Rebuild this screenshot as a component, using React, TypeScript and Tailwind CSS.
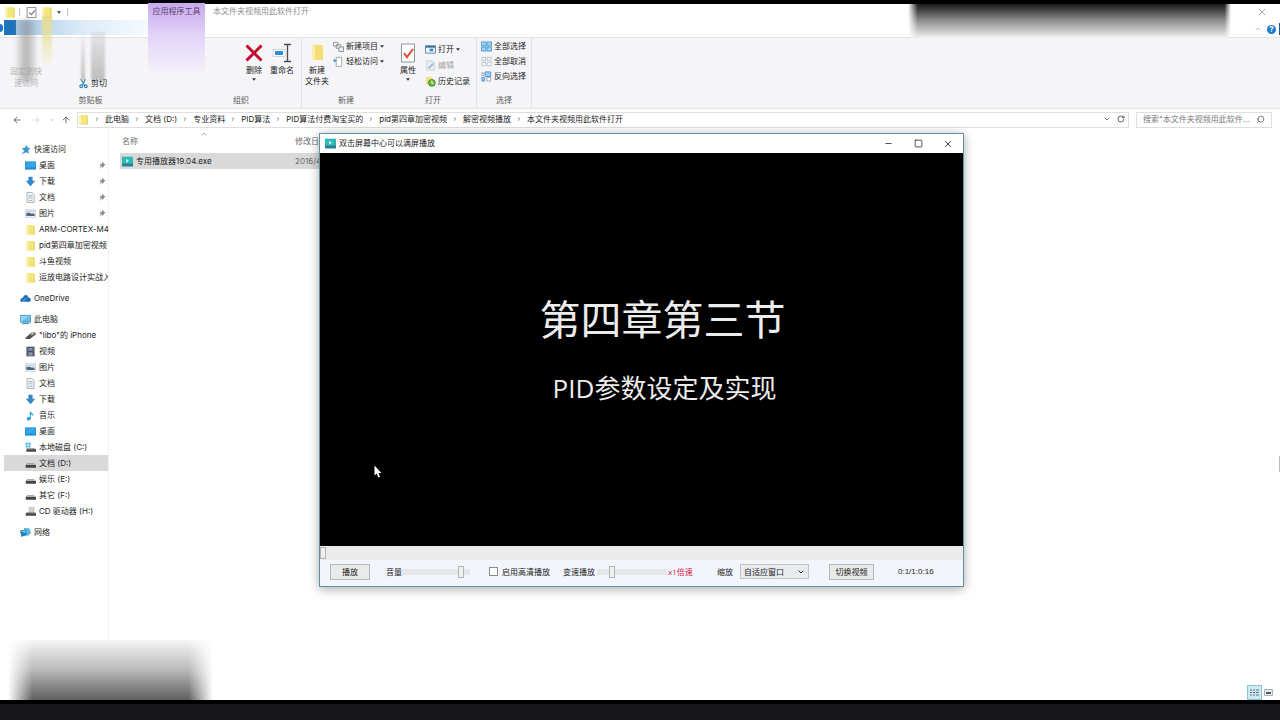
import type { ReactNode } from 'react';
import { ArrowLeft, ArrowRight, ArrowUp, ChevronDown, ChevronRight, ChevronUp, Minus, RotateCw, Search, Square, X } from 'lucide-react';
import clsx from 'clsx';

type IconName =
  | 'folder' | 'star' | 'desktop' | 'download' | 'doc' | 'picture' | 'cloud' | 'pc' | 'phone'
  | 'video' | 'music' | 'system' | 'drive' | 'cd' | 'network' | 'player';

const icons: Record<IconName, ReactNode> = {
  folder: (
    <>
      <path d="M2 1.500h11l1 1V15.500H2z" fill="#f3e67e" />
      <path d="M2 1.500h2.500v14H2z" fill="#f9f2b0" />
      <path d="M12.500 2.500H14v13h-2z" fill="#e6d566" />
    </>
  ),
  star: <path d="M10 1l1 4 4 1-3 3 1 5-4-2-7 3 4-5-3-4 4-.5z" fill="#3d97d3" />,
  desktop: (
    <>
      <path d="M0 2h16v12H0z" fill="#1c8fd6" />
      <path d="M1 3h14v8H1z" fill="#35a5e6" />
    </>
  ),
  download: <path d="M5 1h6v6h4l-7 8-7-8h4z" fill="#3587c9" />,
  doc: (
    <>
      <path d="M3 .7h7l3.300 3V15.300H3z" fill="#f7f9fa" stroke="#8a979c" />
      <path d="M5 5h6M5 7.500h6M5 10h2M9 10h2M5 12.500h6" stroke="#7d9ba8" />
    </>
  ),
  picture: (
    <>
      <path d="M.5 2.500h15v11H.5z" fill="#f4f7fa" stroke="#b9c2c9" />
      <path d="M2 7h5l2 1h5v3.500H2z" fill="#4f6680" />
      <path d="M2 4h12v2H2z" fill="#b8d4ea" />
    </>
  ),
  cloud: <path d="M1 13c-2-4 1-6 3-6 1-5 7-6 8-1 3 0 5 3 3 7z M6 13c-2-4 3-6 4-4" fill="#1a6fbd" stroke="#fff" strokeWidth=".6" />,
  pc: (
    <>
      <path d="M.5 2h15v10H.5z" fill="#5bbbe9" stroke="#3d7ea6" />
      <path d="M1 12L14 3H1z" fill="#8dd5f4" />
      <path d="M3 14h10" stroke="#4c86a5" strokeWidth="1.500" />
    </>
  ),
  phone: (
    <>
      <path d="M0 12l9-8 5-1 2 3-9 7H2z" fill="#55504c" />
      <path d="M8 6l3-3 4 1-5 4z" fill="#bdb8b2" />
    </>
  ),
  video: (
    <>
      <path d="M2 1h12v14H2z" fill="#4a4f5c" />
      <path d="M5 3h6v4H5zM5 9h6v5H5z" fill="#8491b5" />
      <path d="M3 2v12M13 2v12" stroke="#c8c8c8" strokeDasharray="1.500 1.500" />
    </>
  ),
  music: <path d="M7 1c1 3 6 3 5 8-1-2-2-3-3.500-3v6c0 4-6 4-6 1s3-3 4.500-2.500z" fill="#279bdd" />,
  system: (
    <>
      <path d="M1 1h3v3H1zM5 1h3v3H5zM1 5h3v3H1zM5 5h3v3H5z" fill="#38b0dc" />
      <path d="M3 9h11l2 2v3H2v-3z" fill="#474747" />
      <path d="M3 9h11l1 1.500H3z" fill="#b9b9b9" />
    </>
  ),
  drive: (
    <>
      <path d="M3 8h10l3 3v3H1v-3z" fill="#444" />
      <path d="M3 8h10l2 2H2z" fill="#b5b5b5" />
    </>
  ),
  cd: (
    <>
      <path d="M5 1h9v9H5z" fill="#cfcfcf" />
      <path d="M3 9h11l2 2v3H1v-3z" fill="#484848" />
      <path d="M3 9h11l1 1.500H2z" fill="#aaa" />
    </>
  ),
  network: (
    <>
      <path d="M6 1l8 1 2 7-5 4-6-4z" fill="#5ab9df" />
      <path d="M0 5l8-1 2 8-8 2z" fill="#2184bd" />
      <path d="M2 6l5-1 1 4z" fill="#7fd0ee" />
    </>
  ),
  player: (
    <>
      <path d="M0 1h16v14H0z" fill="#2fb9b4" />
      <path d="M0 11h16v4H0z" fill="#2a7f93" />
      <path d="M6 4l4 3-4 3z" fill="#d2f5f0" />
    </>
  ),
};

function Icon({ name, className = 'h-3 w-3' }: { name: IconName; className?: string }) {
  return (
    <svg viewBox="0 0 16 16" className={clsx('shrink-0', className)} aria-hidden="true">
      {icons[name]}
    </svg>
  );
}

function Caret() {
  return (
    <svg viewBox="0 0 5 3" className="h-[3px] w-1 shrink-0" aria-hidden="true">
      <path d="M0 0h5L2.500 3z" fill="#333" />
    </svg>
  );
}

function RibbonGroup({ label, className, children }: { label?: string; className: string; children: ReactNode }) {
  return (
    <section className={clsx('flex flex-col justify-between pb-0.5', className)}>
      <div className="flex">{children}</div>
      <h2 className="text-center leading-[11px] text-[#5c5c5c]">{label}</h2>
    </section>
  );
}

function LargeButton({ icon, caret, children }: { icon: ReactNode; caret?: boolean; children: ReactNode }) {
  return (
    <button type="button" className="flex w-7 shrink-0 flex-col items-center gap-0.5 pt-[5px] leading-[11px]">
      <svg viewBox="0 0 20 20" className="h-5 w-5" aria-hidden="true">{icon}</svg>
      <span className="whitespace-nowrap">{children}</span>
      {caret && <Caret />}
    </button>
  );
}

function SmallButton({ icon, caret, disabled, className, children }: {
  icon: ReactNode; caret?: boolean; disabled?: boolean; className?: string; children: ReactNode;
}) {
  return (
    <button
      type="button"
      disabled={disabled}
      className={clsx('flex items-center gap-0.5 whitespace-nowrap disabled:text-[#a5a5a5]', className)}
    >
      <svg viewBox="0 0 12 12" className="h-[11px] w-[11px] shrink-0" aria-hidden="true">{icon}</svg>
      {children}
      {caret && <Caret />}
    </button>
  );
}

const crumbs = [
  '此电脑', '文档 (D:)', '专业资料', 'PID算法', 'PID算法付费淘宝买的',
  'pid第四章加密视频', '解密视频播放', '本文件夹视频用此软件打开',
];

interface TreeItem {
  icon: IconName;
  label: string;
  pinned?: boolean;
  selected?: boolean;
}

const tree: { root: TreeItem; items: TreeItem[] }[] = [
  {
    root: { icon: 'star', label: '快速访问' },
    items: [
      { icon: 'desktop', label: '桌面', pinned: true },
      { icon: 'download', label: '下载', pinned: true },
      { icon: 'doc', label: '文档', pinned: true },
      { icon: 'picture', label: '图片', pinned: true },
      { icon: 'folder', label: 'ARM-CORTEX-M4' },
      { icon: 'folder', label: 'pid第四章加密视频' },
      { icon: 'folder', label: '斗鱼视频' },
      { icon: 'folder', label: '运放电路设计实战入' },
    ],
  },
  { root: { icon: 'cloud', label: 'OneDrive' }, items: [] },
  {
    root: { icon: 'pc', label: '此电脑' },
    items: [
      { icon: 'phone', label: '"libo"的 iPhone' },
      { icon: 'video', label: '视频' },
      { icon: 'picture', label: '图片' },
      { icon: 'doc', label: '文档' },
      { icon: 'download', label: '下载' },
      { icon: 'music', label: '音乐' },
      { icon: 'desktop', label: '桌面' },
      { icon: 'system', label: '本地磁盘 (C:)' },
      { icon: 'drive', label: '文档 (D:)', selected: true },
      { icon: 'drive', label: '娱乐 (E:)' },
      { icon: 'drive', label: '其它 (F:)' },
      { icon: 'cd', label: 'CD 驱动器 (H:)' },
    ],
  },
  { root: { icon: 'network', label: '网络' }, items: [] },
];

function TreeRow({ item, nested }: { item: TreeItem; nested?: boolean }) {
  return (
    <a
      href="#"
      className={clsx(
        'flex h-4 items-center gap-[3px] whitespace-nowrap',
        nested ? 'pl-[21px]' : 'pl-4',
        item.selected && 'bg-[#d9d9d9]'
      )}
    >
      <Icon name={item.icon} className="h-[11px] w-[11px]" />
      <span className="flex-1">{item.label}</span>
      {item.pinned && (
        <svg viewBox="0 0 8 8" className="mr-0.5 h-2 w-2 shrink-0" aria-hidden="true">
          <path d="M4.500 1l3 3-1 .3-1.200 1.500-.3 1.200-1.500-1.500L1 8l1.800-3L1.500 3.500l1.300-.3L4.200 2z" fill="#8b8b8b" />
        </svg>
      )}
    </a>
  );
}

const rangeBase =
  'appearance-none bg-[#e4e6ea] outline-none [&::-webkit-slider-thumb]:appearance-none [&::-webkit-slider-thumb]:w-1.5 [&::-webkit-slider-thumb]:h-3 [&::-webkit-slider-thumb]:border [&::-webkit-slider-thumb]:border-solid [&::-webkit-slider-thumb]:border-[#b4b4b4] [&::-webkit-slider-thumb]:bg-[#f0f0f0]';

function PlayerWindow() {
  return (
    <section className="absolute left-[319px] top-[133px] z-20 flex w-[645px] flex-col border border-[#5f8fa8] bg-[#f3f5fd] font-['Open_Sans','Noto_Sans_CJK_SC',sans-serif] shadow-[0_2px_10px_rgba(0,0,0,0.35)]">
      <header className="flex h-[19px] items-center bg-white pl-[5px]">
        <Icon name="player" className="h-[11px] w-[11px]" />
        <h1 className="flex-1 pb-0.5 pl-[3px]">双击屏幕中心可以满屏播放</h1>
        <button type="button" aria-label="最小化" className="flex w-[30px] justify-center">
          <Minus className="h-[9px] w-[9px]" />
        </button>
        <button type="button" aria-label="最大化" className="flex w-[30px] justify-center">
          <Square className="h-[9px] w-[9px]" />
        </button>
        <button type="button" aria-label="关闭" className="flex w-[30px] justify-center">
          <X className="h-2.5 w-2.5" />
        </button>
      </header>

      {/* 画面 */}
      <div className="relative flex h-[393px] flex-col items-center bg-black pl-[42px] pt-[141px] text-[#ececec]">
        <p className="text-[41px] leading-[50px]">第四章第三节</p>
        <p className="mt-7 pl-1 text-[26px] leading-8">PID参数设定及实现</p>
        <svg viewBox="0 0 8 13" className="absolute left-[54px] top-[312px] h-[13px] w-2" aria-hidden="true">
          <path d="M.5.5v10l2.200-2 1.600 4 1.700-.7-1.600-3.800h3z" fill="#fff" />
        </svg>
      </div>

      <input
        type="range"
        aria-label="播放进度"
        defaultValue={0}
        className={clsx(rangeBase, 'h-3.5 w-full bg-[#ebebeb]')}
      />

      {/* 控制栏 */}
      <div className="flex h-[26px] items-center pb-[3px] pl-2.5">
        <button type="button" className="h-4 w-10 border border-[#b8b8b8] bg-[#eaeaea] leading-[13px]">播放</button>
        <label htmlFor="volume" className="ml-4 w-4">音量</label>
        <input id="volume" type="range" defaultValue={90} className={clsx(rangeBase, 'h-1.5 w-[68px]')} />
        <input
          id="hd"
          type="checkbox"
          className="ml-[19px] h-[9px] w-[9px] appearance-none border border-[#8a8a8a] bg-white checked:bg-[#3587c9]"
        />
        <label htmlFor="hd" className="ml-1 w-12">启用高清播放</label>
        <label htmlFor="speed" className="ml-[13px] w-8">变速播放</label>
        <input id="speed" type="range" defaultValue={19} className={clsx(rangeBase, 'ml-0.5 h-1.5 w-[70px]')} />
        <span className="ml-px w-7 text-[#dc1440]">x1倍速</span>
        <label htmlFor="zoom" className="ml-[21px] w-4">缩放</label>
        <span className="relative ml-[7px] flex items-center">
          <select id="zoom" className="h-[15px] w-[69px] appearance-none border border-[#c3c3c3] bg-[#e9ebee] pl-[3px] leading-[12px]">
            <option>自适应窗口</option>
          </select>
          <ChevronDown className="pointer-events-none absolute right-1 h-2 w-2" strokeWidth={3} />
        </span>
        <button type="button" className="ml-5 h-4 w-[45px] whitespace-nowrap border border-[#b8b8b8] bg-[#eaeaea] leading-[13px]">
          切换视频
        </button>
        <span className="ml-6 font-['Liberation_Sans',sans-serif]">0:1/1:0:16</span>
      </div>
    </section>
  );
}

export default function App() {
  return (
    <div className="relative flex min-h-screen flex-col overflow-hidden bg-white font-['Inter','Noto_Sans_CJK_SC',sans-serif] text-[8px] leading-[11px] text-[#1c1c1c]">
      <div className="h-1 bg-black" />

      {/* 标题栏 */}
      <header className="flex h-4 items-center pl-1">
        <Icon name="folder" />
        <span className="ml-[3px] h-2 w-px bg-[#c4c4c4]" />
        <button type="button" aria-label="属性" className="ml-1.5">
          <svg viewBox="0 0 10 10" className="h-[11px] w-[11px]" aria-hidden="true">
            <path d="M1 .5h8v9H1z" fill="#fff" stroke="#999" />
            <path d="M3 5l2 2 3-4" fill="none" stroke="#777" />
          </svg>
        </button>
        <Icon name="folder" className="ml-1 h-3 w-3" />
        <span className="ml-1"><Caret /></span>
        <span className="ml-1.5 h-2 w-px bg-[#c4c4c4]" />
        <span className="relative z-10 ml-20 w-[57px] pb-0.5 text-center text-[#5a4272]">应用程序工具</span>
        <h1 className="ml-2 flex-1 pb-0.5 text-[#8e8e8e]">本文件夹视频用此软件打开</h1>
        <button type="button" aria-label="关闭" className="mr-3 text-[#8e8e8e]">
          <X className="h-3 w-3" strokeWidth={1.5} />
        </button>
      </header>

      {/* 选项卡 */}
      <div className="flex h-[17px] items-start justify-between">
        <div className="flex">
          <span className="mt-1 h-2 w-[3px] rounded-r-full bg-[#1979ca]" />
          <span className="ml-px h-[15px] w-3 bg-[#2173b9]" />
          <span className="h-[15px] w-[132px] bg-linear-to-r from-[#a3c8e8] via-[#dcebf7] to-[#f6faff]" />
        </div>
        <div className="flex items-center pt-[3px]">
          <ChevronUp className="mr-[5px] h-2 w-2 text-[#999]" />
          <button type="button" aria-label="帮助" className="flex h-[9px] w-[9px] items-center justify-center rounded-full bg-[#1979ca] font-bold text-white">
            ?
          </button>
          <span className="ml-[3px] h-3 w-px bg-[#1d5a91]" />
        </div>
      </div>

      {/* 功能区 */}
      <div className="flex h-[72px] border-y border-[#e2e3e5] bg-[#f5f5f8]">
        <RibbonGroup label="剪贴板" className="w-[181px]">
          <div className="w-[78px] pl-2.5 pt-[27px] leading-3 text-[#b9b9b9]">
            固定到快
            <br />
            <span className="pl-1">速访问</span>
          </div>
          <SmallButton
            className="mt-10"
            icon={<path d="M3 1l4 7M8 1L5 8M2 9a1.500 1.500 0 1 0 3 0 1.500 1.500 0 1 0-3 0M7 9a1.500 1.500 0 1 0 3 0 1.500 1.500 0 1 0-3 0" fill="none" stroke="#2d7fb0" strokeWidth="1.200" />}
          >
            剪切
          </SmallButton>
        </RibbonGroup>

        <RibbonGroup label="组织" className="w-[121px] border-r border-[#e2e3e5]">
          <div className="flex flex-1 justify-end pr-[5px]">
            <LargeButton caret icon={<path d="M2.500 2.500l15 15M17.500 2.500l-15 15" stroke="#c00b2d" strokeWidth="3" />}>
              删除
            </LargeButton>
            <LargeButton
              icon={
                <>
                  <path d="M1 6.500h12v7H1z" fill="#fff" stroke="#c9d3da" />
                  <path d="M3 8h8v4H3z" fill="#2f8dd6" />
                  <path d="M12 1.500h3l.5.500.5-.5h3M15.500 2v16M12 18.500h3l.5-.5.5.5h3" fill="none" stroke="#4a4a4a" strokeWidth="1.300" />
                </>
              }
            >
              重命名
            </LargeButton>
          </div>
        </RibbonGroup>

        <RibbonGroup label="新建" className="w-[88px]">
          <div className="flex gap-0.5 pl-px">
            <LargeButton
              icon={
                <>
                  <path d="M5 2h10l1 1v14H5z" fill="#f5dd75" />
                  <path d="M5 2h3v15H5z" fill="#fbeea6" />
                </>
              }
            >
              新建
              <br />
              文件夹
            </LargeButton>
            <div className="flex flex-col pt-px">
              <SmallButton
                caret
                className="h-[15px]"
                icon={
                  <>
                    <path d="M.5 1.500h5v4h-5zM3.500 4h5v4h-5z" fill="#fff" stroke="#828c94" />
                    <path d="M6.500 6.500h5v5h-5z" fill="#e7eef4" stroke="#828c94" />
                  </>
                }
              >
                新建项目
              </SmallButton>
              <SmallButton
                caret
                className="h-[15px]"
                icon={
                  <>
                    <path d="M3.500 1.500h6v10h-6z" fill="#fff" stroke="#9aa2a8" />
                    <path d="M0 5h4M2 3v4" stroke="#3b87bd" />
                  </>
                }
              >
                轻松访问
              </SmallButton>
            </div>
          </div>
        </RibbonGroup>

        <RibbonGroup label="打开" className="w-[87px] border-r border-[#e2e3e5]">
          <div className="flex gap-[3px] pl-1">
            <LargeButton
              caret
              icon={
                <>
                  <path d="M3.500 1h13v18h-13z" fill="#fff" stroke="#8d9499" />
                  <path d="M6 10l3 4 6-8" fill="none" stroke="#dd4a2c" strokeWidth="2" />
                </>
              }
            >
              属性
            </LargeButton>
            <div className="flex flex-col pt-[3px]">
              <SmallButton
                caret
                className="h-4"
                icon={
                  <>
                    <path d="M.5 2h11v8H.5z" fill="#eef4f8" stroke="#5d7f96" />
                    <path d="M.5 2h11v2H.5z" fill="#35719b" />
                    <path d="M5 5h4v3H5z" fill="#2d8fd0" />
                  </>
                }
              >
                打开
              </SmallButton>
              <SmallButton
                disabled
                className="h-4"
                icon={
                  <>
                    <path d="M2 1h6l2 2v8H2z" fill="#e9f0f6" stroke="#c1cfdb" />
                    <path d="M4 9l5-5" stroke="#9fb9d0" strokeWidth="2" />
                  </>
                }
              >
                编辑
              </SmallButton>
              <SmallButton
                className="h-4"
                icon={
                  <>
                    <path d="M1 1h7v8H1z" fill="#f3dd83" />
                    <circle cx="7.500" cy="7.500" r="3.700" fill="#6bb544" stroke="#3e8b2b" />
                    <path d="M7.500 5v3h2" fill="none" stroke="#fff" />
                  </>
                }
              >
                历史记录
              </SmallButton>
            </div>
          </div>
        </RibbonGroup>

        <RibbonGroup label="选择" className="w-[55px] border-r border-[#e2e3e5]">
          <div className="flex flex-col pl-1 pt-px">
            <SmallButton
              className="h-[15px]"
              icon={<path d="M.5 1h5v4.500h-5zM6.500 1h5v4.500h-5zM.5 6.500h5V11h-5zM6.500 6.500h5V11h-5z" fill="#9fd2f3" stroke="#4a9bd1" />}
            >
              全部选择
            </SmallButton>
            <SmallButton
              className="h-[15px]"
              icon={<path d="M1 1.500h4v3.500H1zM7 1.500h4v3.500H7zM1 7h4v3.500H1zM7 7h4v3.500H7z" fill="#fff" stroke="#b4bfc7" />}
            >
              全部取消
            </SmallButton>
            <SmallButton
              className="h-[15px]"
              icon={
                <>
                  <path d="M4.500 1h6v5h-6zM1 7h3v4H1z" fill="#9fcdf2" stroke="#4e94cb" />
                  <path d="M6.500 7h4v4h-4zM1 2h2v3H1z" fill="#fff" stroke="#93a9ba" />
                </>
              }
            >
              反向选择
            </SmallButton>
          </div>
        </RibbonGroup>
      </div>

      {/* 地址栏 */}
      <div className="flex h-[21px] items-center pl-3 pr-2 text-[#555]">
        <button type="button" aria-label="后退"><ArrowLeft className="h-2.5 w-2.5" /></button>
        <button type="button" aria-label="前进" className="ml-[9px] text-[#d5d5d5]"><ArrowRight className="h-2.5 w-2.5" /></button>
        <button type="button" aria-label="最近浏览" className="ml-2 text-[#999]"><ChevronDown className="h-1.5 w-1.5" /></button>
        <button type="button" aria-label="上移" className="ml-1.5"><ArrowUp className="h-2.5 w-2.5" /></button>
        <nav className="ml-1.5 flex h-4 flex-1 items-center border border-[#dfdfdf] pb-px text-[#1c1c1c]">
          <Icon name="folder" className="h-[11px] w-[11px]" />
          {crumbs.map(crumb => (
            <span key={crumb} className="flex items-center whitespace-nowrap">
              <span className="flex w-4 justify-center">
                <ChevronRight className="h-1.5 w-1.5 text-[#666]" strokeWidth={3} />
              </span>
              <a href="#">{crumb}</a>
            </span>
          ))}
          <span className="flex-1" />
          <ChevronDown className="mr-1.5 h-2 w-2 text-[#777]" strokeWidth={3} />
          <button type="button" aria-label="刷新" className="mr-[3px] text-[#666]"><RotateCw className="h-2 w-2" strokeWidth={3} /></button>
        </nav>
        <div className="ml-[7px] flex h-4 w-[136px] items-center border border-[#dfdfdf] pl-1.5 pr-1.5">
          <input
            type="text"
            aria-label="搜索"
            placeholder={'搜索"本文件夹视频用此软件...'}
            className="min-w-0 flex-1 outline-none placeholder:text-[#7b7b7b]"
          />
          <Search className="h-[9px] w-[9px] -scale-x-100" />
        </div>
      </div>

      <main className="flex flex-1">
        <nav className="flex w-[109px] flex-col gap-[5px] border-r border-[#f0f0f0] pl-1 pt-[11px]">
          {tree.map(({ root, items }) => (
            <div key={root.label} className="overflow-hidden">
              <TreeRow item={root} />
              {items.map(item => (
                <TreeRow key={item.label} item={item} nested />
              ))}
            </div>
          ))}
        </nav>

        <div className="flex flex-1 flex-col justify-between">
          <div className="relative ml-[11px] w-[420px]">
            <ChevronUp className="absolute left-20 top-0 h-2 w-2 text-[#888]" />
            <table className="w-full text-left">
              <thead>
                <tr className="h-[23px] text-[#6d6d6d]">
                  <th className="w-[175px] pl-0.5 font-normal">名称</th>
                  <th className="font-normal">修改日期</th>
                </tr>
              </thead>
              <tbody>
                <tr className="h-4 bg-[#d9d9d9]">
                  <td>
                    <span className="flex items-center gap-[3px] pl-0.5">
                      <Icon name="player" className="h-[11px] w-[11px]" />
                      专用播放器19.04.exe
                    </span>
                  </td>
                  <td className="text-[#6d6d6d]">2016/4</td>
                </tr>
              </tbody>
            </table>
          </div>

          {/* 视图切换 */}
          <div className="flex items-center justify-end gap-0.5 pr-[7px]">
            <button type="button" aria-label="详细信息" className="flex h-[15px] w-[15px] items-center justify-center border border-[#8cc3dd] bg-[#cfe8f4]">
              <svg viewBox="0 0 9 7" className="h-[7px] w-[9px]" aria-hidden="true">
                <path d="M0 1h2M3 1h2M6 1h3M0 3.500h2M3 3.500h2M6 3.500h3M0 6h2M3 6h2M6 6h3" stroke="#4f7688" />
              </svg>
            </button>
            <button type="button" aria-label="大图标">
              <svg viewBox="0 0 9 7" className="h-[7px] w-[9px]" aria-hidden="true">
                <path d="M.5.5h8v6h-8z" fill="#e6ebef" stroke="#a9b2b9" />
                <path d="M2 3h5v2H2z" fill="#4c5c68" />
              </svg>
            </button>
          </div>
        </div>
      </main>

      <footer className="h-5 border-t-4 border-black bg-[#17171a]" />

      {/* 遮挡和拖影 */}
      <div className="pointer-events-none absolute left-[148px] top-[3px] h-[70px] w-[57px] bg-linear-to-b from-[#c9a9ec] via-[#e0d3f8] via-45% to-[#f5f1f9]" />
      <div className="pointer-events-none absolute left-4 top-5 h-[62px] w-5 bg-linear-to-r from-[#999]/10 via-[#888]/60 to-[#999]/20 blur-[2px]" />
      <div className="pointer-events-none absolute left-[42px] top-4 h-12 w-2.5 bg-linear-to-b from-[#e8dc8c] to-[#f4f0cc]/30 blur-[1px]" />
      <div className="pointer-events-none absolute left-[81px] top-8 h-12 w-1 bg-linear-to-b from-transparent to-[#aaa]/70 blur-[1px]" />
      <div className="pointer-events-none absolute left-[91px] top-8 h-12 w-3.5 bg-linear-to-b from-[#aaa]/20 to-[#999]/60 blur-[1px]" />
      <div className="pointer-events-none absolute right-[49px] top-1 h-[34px] w-[323px] bg-linear-to-b from-[#1c1c1c] via-[#929292] to-[#f2f2f2] [mask-image:linear-gradient(to_right,transparent,black_3%,black_98%,transparent)]" />
      <div className="pointer-events-none absolute bottom-5 left-2 h-[60px] w-[205px] bg-linear-to-b from-[#f6f6f6] via-[#b9b9b9] to-[#606060] [mask-image:linear-gradient(to_right,transparent,black_12%,black_88%,transparent)]" />
      <div className="pointer-events-none absolute right-0 top-[456px] h-4 w-px bg-[#bbb]" />

      <PlayerWindow />
    </div>
  );
}
